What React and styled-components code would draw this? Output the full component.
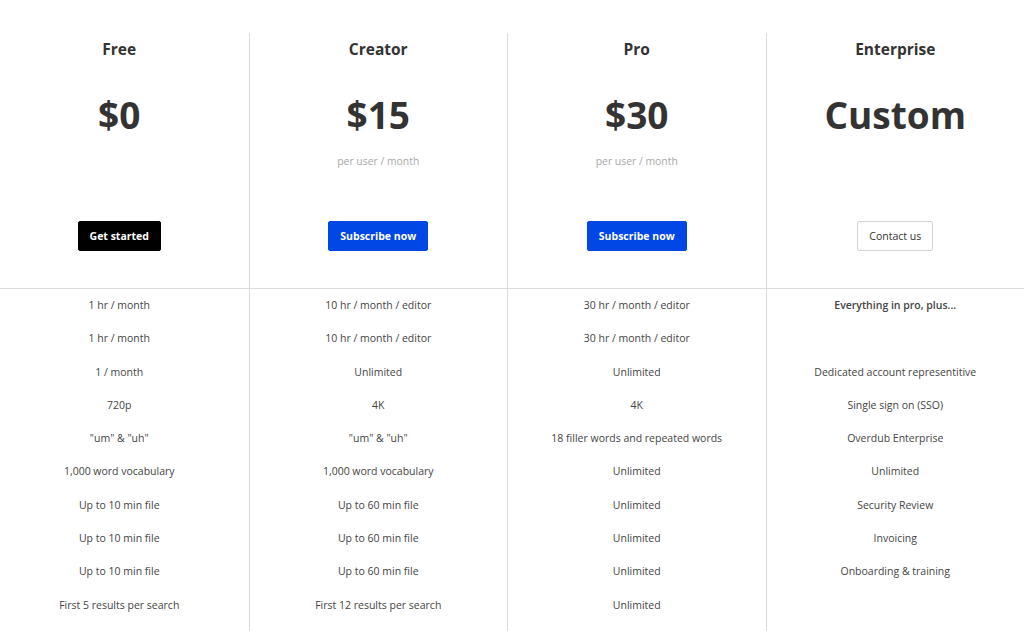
import styled, { createGlobalStyle } from "styled-components";

const GlobalStyle = createGlobalStyle`
  body {
    margin: 0;
    background: #fff;
    font-family: "Open Sans", "Noto Sans", sans-serif;
    color: #333;
    overflow: hidden;
  }
`;

const plans = [
  {
    name: "Free",
    price: "$0",
    button: { label: "Get started", variant: "dark" },
    features: [
      "1 hr / month",
      "1 hr / month",
      "1 / month",
      "720p",
      "\"um\" & \"uh\"",
      "1,000 word vocabulary",
      "Up to 10 min file",
      "Up to 10 min file",
      "Up to 10 min file",
      "First 5 results per search",
    ],
  },
  {
    name: "Creator",
    price: "$15",
    unit: "per user / month",
    button: { label: "Subscribe now", variant: "primary" },
    features: [
      "10 hr / month / editor",
      "10 hr / month / editor",
      "Unlimited",
      "4K",
      "\"um\" & \"uh\"",
      "1,000 word vocabulary",
      "Up to 60 min file",
      "Up to 60 min file",
      "Up to 60 min file",
      "First 12 results per search",
    ],
  },
  {
    name: "Pro",
    price: "$30",
    unit: "per user / month",
    button: { label: "Subscribe now", variant: "primary" },
    features: [
      "30 hr / month / editor",
      "30 hr / month / editor",
      "Unlimited",
      "4K",
      "18 filler words and repeated words",
      "Unlimited",
      "Unlimited",
      "Unlimited",
      "Unlimited",
      "Unlimited",
    ],
  },
  {
    name: "Enterprise",
    price: "Custom",
    button: { label: "Contact us", variant: "outline" },
    lead: "Everything in pro, plus...",
    features: [
      "",
      "Dedicated account representitive",
      "Single sign on (SSO)",
      "Overdub Enterprise",
      "Unlimited",
      "Security Review",
      "Invoicing",
      "Onboarding & training",
    ],
  },
];

const Page = styled.div`
  padding-top: 33px;
  width: 1034px;
  margin-left: -10px;
`;

const Grid = styled.div`
  display: grid;
  grid-template-columns: repeat(4, 1fr);
`;

const Column = styled.div`
  display: flex;
  flex-direction: column;
  border-left: ${({ $first }) => ($first ? "none" : "1px solid #dcdcdc")};
  min-height: 598px;
`;

const Header = styled.div`
  height: 256px;
  display: flex;
  flex-direction: column;
  align-items: center;
  padding-top: 5px;
  padding-bottom: 37px;
  box-sizing: border-box;
  border-bottom: 1px solid #dcdcdc;
  margin-left: ${({ $first }) => ($first ? "0" : "-1px")};
  padding-left: ${({ $first }) => ($first ? "0" : "1px")};
`;

const Title = styled.h3`
  margin: 0;
  font-size: 15.5px;
  line-height: 22px;
  font-weight: 700;
  color: #333;
`;

const Price = styled.div`
  margin-top: 31px;
  font-size: 37px;
  line-height: 48px;
  font-weight: 700;
  color: #333;
`;

const Unit = styled.div`
  margin-top: 14px;
  font-size: 10.4px;
  line-height: 16px;
  color: #a8a8a8;
`;

const variants = {
  dark: "background: #000; color: #fff; border: 1px solid #000;",
  primary: "background: #0047e6; color: #fff; border: 1px solid #0047e6;",
  outline: "background: #fff; color: #333; border: 1px solid #d4d4d4; font-weight: 400;",
};

const Button = styled.button`
  margin-top: auto;
  height: 30px;
  padding: 0 11px;
  border-radius: 2px;
  font-family: inherit;
  font-size: 10.5px;
  font-weight: 700;
  cursor: pointer;
  ${({ $variant }) => variants[$variant]}
`;

const Features = styled.ul`
  list-style: none;
  margin: 0;
  padding: 0;
`;

const Feature = styled.li`
  height: 33.3px;
  line-height: 33.3px;
  text-align: center;
  font-size: 10.5px;
  color: #444;
  font-weight: ${({ $bold }) => ($bold ? 600 : 400)};
  white-space: nowrap;
`;

export default function App() {
  return (
    <>
      <GlobalStyle />
      <Page>
        <Grid>
          {plans.map((plan, i) => (
            <Column key={plan.name} $first={i === 0}>
              <Header $first={i === 0}>
                <Title>{plan.name}</Title>
                <Price>{plan.price}</Price>
                {plan.unit && <Unit>{plan.unit}</Unit>}
                <Button $variant={plan.button.variant}>{plan.button.label}</Button>
              </Header>
              <Features>
                {plan.lead && <Feature $bold>{plan.lead}</Feature>}
                {plan.features.map((f, j) => (
                  <Feature key={j}>{f}</Feature>
                ))}
              </Features>
            </Column>
          ))}
        </Grid>
      </Page>
    </>
  );
}
